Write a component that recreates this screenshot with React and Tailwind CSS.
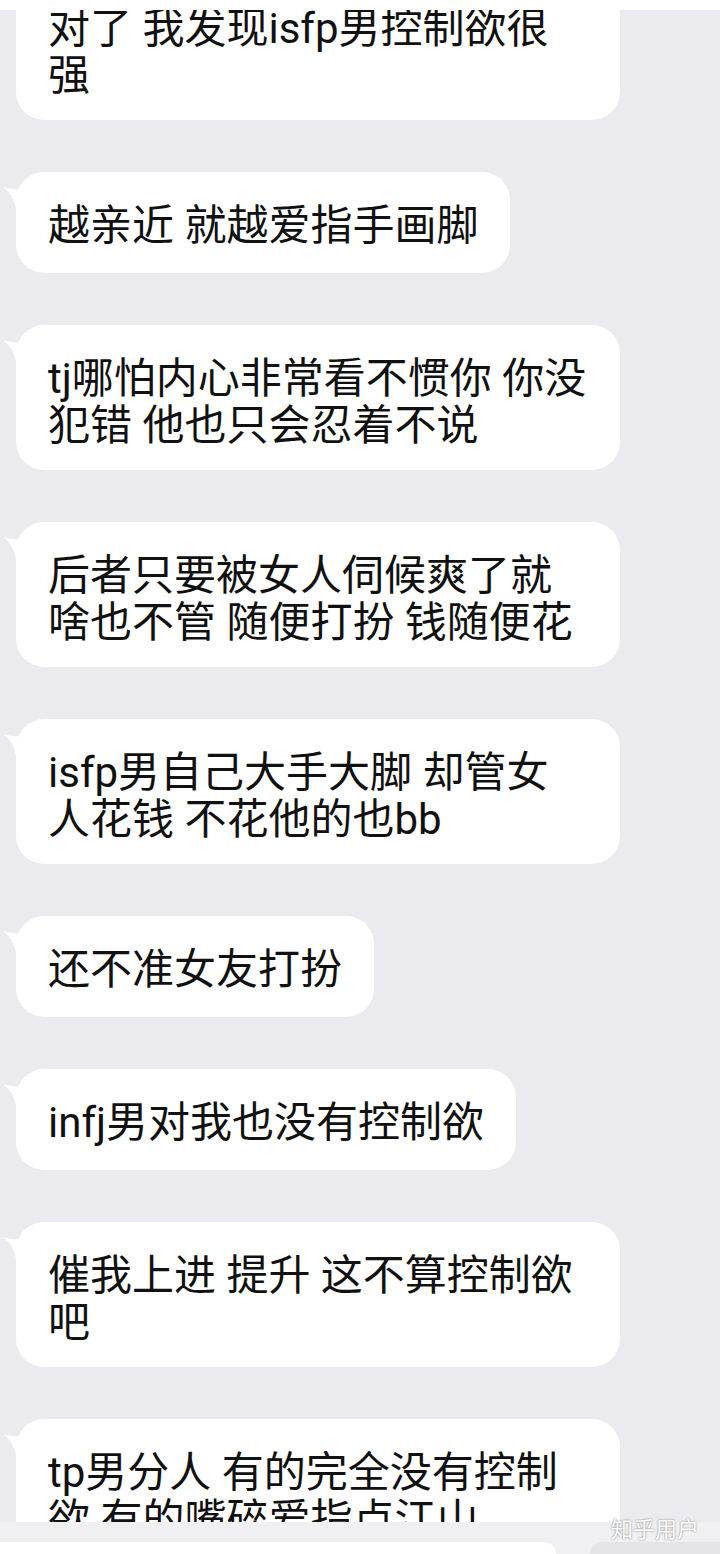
import React from 'react';

const messages = [
  ['对了 我发现isfp男控制欲很', '强'],
  ['越亲近 就越爱指手画脚'],
  ['tj哪怕内心非常看不惯你 你没', '犯错 他也只会忍着不说'],
  ['后者只要被女人伺候爽了就', '啥也不管 随便打扮 钱随便花'],
  ['isfp男自己大手大脚 却管女', '人花钱 不花他的也bb'],
  ['还不准女友打扮'],
  ['infj男对我也没有控制欲'],
  ['催我上进 提升 这不算控制欲', '吧'],
  ['tp男分人 有的完全没有控制', '欲 有的嘴碎爱指点江山'],
];

function Tail() {
  return (
    <svg className="absolute left-[-14px] top-[8px]" width="24" height="36" viewBox="0 0 24 36">
      <path d="M1 7 C8 9 14 10 24 9 L24 36 L15 36 C14 22 9 13 1 7 Z" fill="#ffffff" />
    </svg>
  );
}

function Bubble({ lines }) {
  const multi = lines.length > 1;
  return (
    <div
      className={`relative bg-white rounded-[28px] pl-[32px] pr-[32px] pt-[30px] pb-[21px] min-h-[101px] ${multi ? 'w-[604px]' : 'w-fit'}`}
    >
      <Tail />
      {lines.map((l, i) => (
        <div key={i} className="whitespace-nowrap text-[42px] leading-[47px] text-[#111111]">
          {l}
        </div>
      ))}
    </div>
  );
}

export default function App() {
  return (
    <div className="relative w-[720px] h-[1554px] overflow-hidden flex flex-col bg-[#ebebef] font-['Roboto','Noto_Sans_CJK_SC',sans-serif]">
      {/* top strip */}
      <div className="h-[10px] bg-white shrink-0" />

      {/* chat */}
      <div className="flex-1 min-h-0 overflow-hidden">
        <div className="-mt-[35px] flex flex-col gap-[52px] pl-[16px]">
          {messages.map((m, i) => (
            <Bubble key={i} lines={m} />
          ))}
        </div>
      </div>

      {/* stitched bottom */}
      <div className="h-[20px] bg-[#f0f0f2] shrink-0" />
      <div className="h-[12px] bg-[#f0f0f2] shrink-0 flex justify-between">
        <div className="w-[556px] bg-white rounded-tr-[18px]" />
        <div className="w-[130px] bg-[#e5e5e9] rounded-tl-[18px]" />
      </div>

      {/* watermark */}
      <div className="absolute left-[611px] top-[1514px] text-[22px] leading-[26px] text-white font-['Noto_Sans_CJK_SC',sans-serif] [text-shadow:0_0_2px_rgba(0,0,0,0.55)]">
        知乎用户
      </div>
    </div>
  );
}
